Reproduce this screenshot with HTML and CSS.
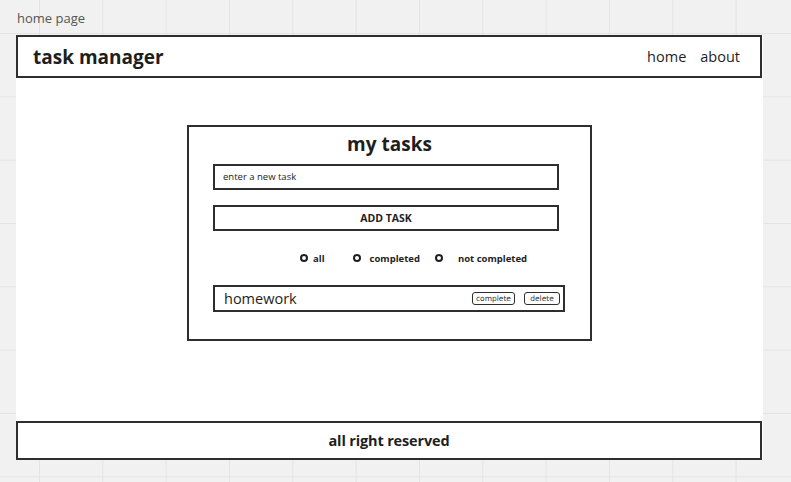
FILE: index.html
```html
<!DOCTYPE html>
<html lang="en">
<head>
  <meta charset="UTF-8">
  <meta name="viewport" content="width=device-width, initial-scale=1.0">
  <title>home page</title>
  <link rel="stylesheet" href="styles.css">
</head>
<body>

  <!-- Canvas frame label -->
  <div class="frame-label">home page</div>

  <div class="frame">
    <!-- Header Section -->
    <header class="site-header">
      <h1 class="logo">task manager</h1>
      <nav class="nav">
        <a href="#">home</a>
        <a href="#">about</a>
      </nav>
    </header>

    <!-- Main Content Section -->
    <main class="content">
      <div class="task-card">
        <h2 class="card-title">my tasks</h2>
        <div class="task-input">enter a new task</div>
        <button class="add-btn">ADD TASK</button>

        <div class="filters">
          <label class="filter"><span class="radio"></span>all</label>
          <label class="filter"><span class="radio"></span>completed</label>
          <label class="filter"><span class="radio"></span>not completed</label>
        </div>

        <div class="task-row">
          <span class="task-name">homework</span>
          <div class="task-actions">
            <button class="small-btn">complete</button>
            <button class="small-btn">delete</button>
          </div>
        </div>
      </div>
    </main>

    <!-- Footer Section -->
    <footer class="site-footer">
      <p>all right reserved</p>
    </footer>
  </div>

</body>
</html>
```

FILE: styles.css
```css
/* Reset some default styles */
* {
  margin: 0;
  padding: 0;
  box-sizing: border-box;
}

body {
  font-family: "Open Sans", "Noto Sans", sans-serif;
  color: #1e1e1e;
  width: 791px;
  height: 482px;
  overflow: hidden;
  background-color: #f1f1f1;
  background-image:
    linear-gradient(to right, #e4e4e4 1px, transparent 1px),
    linear-gradient(to bottom, #e4e4e4 1px, transparent 1px);
  background-size: 63.33px 63.33px;
  background-position: 39px 33px;
}

.frame-label {
  font-size: 13px;
  color: #555;
  padding: 9px 0 0 17px;
  height: 35px;
}

.frame {
  margin-left: 16px;
  width: 747px;
  height: 425px;
  background-color: white;
  display: flex;
  flex-direction: column;
}

/* Header */
.site-header {
  height: 43px;
  border: 2px solid #2e2e2e;
  display: flex;
  justify-content: space-between;
  align-items: center;
  padding: 0 20px 0 15px;
  width: 746px;
}

.logo {
  font-size: 19px;
  font-weight: 700;
}

.nav {
  display: flex;
  gap: 14px;
}

.nav a {
  color: #1e1e1e;
  text-decoration: none;
  font-size: 14.5px;
}

/* Main */
.content {
  flex: 1;
  padding-top: 47px;
  display: flex;
  justify-content: center;
  align-items: flex-start;
}

.task-card {
  width: 405px;
  height: 216px;
  border: 2px solid #2e2e2e;
  padding: 3px 0 0 24px;
}

.card-title {
  font-size: 19px;
  font-weight: 700;
  text-align: center;
  margin-left: -24px;
  line-height: 28px;
  margin-bottom: 6px;
}

.task-input {
  width: 346px;
  height: 26px;
  border: 2px solid #2e2e2e;
  font-size: 9.5px;
  padding-left: 8px;
  line-height: 22px;
  color: #222;
}

.add-btn {
  display: block;
  margin-top: 15px;
  width: 346px;
  height: 26px;
  border: 2px solid #2e2e2e;
  background: white;
  font-family: inherit;
  font-size: 10.5px;
  font-weight: 700;
  color: #1e1e1e;
}

.filters {
  display: flex;
  align-items: center;
  margin: 19px 0 0 87px;
  height: 16px;
}

.filter {
  display: flex;
  align-items: center;
  font-size: 9.5px;
  font-weight: 700;
}

.filter:nth-child(1) { margin-right: 28px; }
.filter:nth-child(2) { margin-right: 15px; }
.filter:nth-child(2) .radio { margin-right: 9px; }
.filter:nth-child(3) .radio { margin-right: 15px; }

.radio {
  width: 8px;
  height: 8px;
  border: 2px solid #1e1e1e;
  border-radius: 50%;
  margin-right: 5px;
}

.task-row {
  margin-top: 19px;
  width: 352px;
  height: 27px;
  border: 2px solid #2e2e2e;
  display: flex;
  justify-content: space-between;
  align-items: center;
  padding: 0 3px 0 9px;
}

.task-name {
  font-size: 14.5px;
}

.task-actions {
  display: flex;
  gap: 9px;
}

.small-btn {
  height: 13px;
  padding: 0 3px;
  border: 1.5px solid #2e2e2e;
  border-radius: 3px;
  background: white;
  font-family: "DejaVu Sans", sans-serif;
  font-size: 7.5px;
  line-height: 10px;
  color: #333;
}

.small-btn:last-child {
  width: 36px;
}

/* Footer */
.site-footer {
  height: 39px;
  border: 2px solid #2e2e2e;
  display: flex;
  align-items: center;
  justify-content: center;
  width: 746px;
}

.site-footer p {
  font-size: 14.5px;
  font-weight: 700;
  letter-spacing: -0.15px;
}
```
